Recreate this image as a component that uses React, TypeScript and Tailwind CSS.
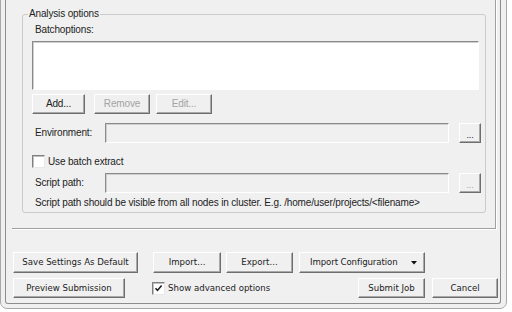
import { ReactNode } from "react";

const btn =
  "flex items-center justify-center bg-[#f0f0f0] border border-t-white border-l-white border-r-[#6e6e6e] border-b-[#6e6e6e] shadow-[inset_-1px_-1px_0_#a9a9a9]";
const sunken =
  "border border-t-[#8a8a8a] border-l-[#8a8a8a] border-r-white border-b-white shadow-[inset_1px_1px_0_#cfcfcf]";

function Button({ className, children, disabled }: { className: string; children: ReactNode; disabled?: boolean }) {
  return (
    <div className={`${btn} ${className} ${disabled ? "text-[#a3a3a3]" : "text-[#222]"}`}>{children}</div>
  );
}

function CheckBox({ checked }: { checked?: boolean }) {
  return (
    <div className="w-[13px] h-[13px] shrink-0 bg-white border border-t-[#808080] border-l-[#808080] border-r-[#e8e8e8] border-b-[#e8e8e8] shadow-[inset_1px_1px_0_#c0c0c0] flex items-center justify-center">
      {checked && (
        <svg width="9" height="9" viewBox="0 0 9 9">
          <path d="M1.5 4.2 L3.5 6.4 L7.6 1.6" fill="none" stroke="#1c1c1c" strokeWidth="1.6" />
        </svg>
      )}
    </div>
  );
}

export default function App() {
  return (
    <div className="w-[512px] h-[312px] bg-white overflow-hidden">
      {/* window frame */}
      <div className="-mt-[6px] w-[507px] h-[315px] border border-[#a8a8a8] rounded-b-[7px] bg-[#f0f0f0] pl-[4px] pr-[5px] pb-[4px]">
        <div className="h-full border border-t-0 border-[#8d8d8d] rounded-b-[3px] flex flex-col">
          {/* options panel */}
          <div className="ml-[6px] mr-[4px] border-r border-b border-[#a0a0a0] shadow-[1px_1px_0_#ffffff] pl-[10px] pr-[9px] pt-[19px] pb-[15px] font-['Liberation_Sans',Arial,sans-serif] text-[10px] leading-[12px] tracking-[-0.15px] text-[#222]">
            <div className="border border-[#cbcbcb] rounded-[3px] pl-[9px] pr-[4px] pb-[3px]">
              <div className="-mt-[7px] -ml-[4px] w-fit px-[1px] bg-[#f0f0f0]">Analysis options</div>
              <div className="mt-[4px] ml-[3px]">Batchoptions:</div>
              <div className={`mt-[5px] mr-[2px] h-[49px] bg-white ${sunken}`} />

              <div className="mt-[4px] flex h-[20px]">
                <Button className="w-[53px]">Add...</Button>
                <Button className="ml-[9px] w-[56px]" disabled>Remove</Button>
                <Button className="ml-[6px] w-[56px]" disabled>Edit...</Button>
              </div>

              <div className="mt-[9px] flex items-center h-[20px]">
                <div className="w-[73px] pl-[3px]">Environment:</div>
                <div className={`w-[344px] h-full bg-[#f0f0f0] ${sunken}`} />
                <Button className="ml-[10px] w-[22px] h-full">
                  <span className="mt-[4px] text-[9px]">...</span>
                </Button>
              </div>

              <div className="mt-[12px] flex items-center h-[13px]">
                <CheckBox />
                <span className="ml-[3px]">Use batch extract</span>
              </div>

              <div className="mt-[5px] flex items-center h-[20px]">
                <div className="w-[73px] pl-[3px]">Script path:</div>
                <div className={`w-[344px] h-full bg-[#f0f0f0] ${sunken}`} />
                <Button className="ml-[10px] w-[22px] h-full" disabled>
                  <span className="mt-[4px] text-[9px]">...</span>
                </Button>
              </div>

              <div className="mt-[4px] ml-[3px] whitespace-nowrap">
                Script path should be visible from all nodes in cluster. E.g. /home/user/projects/&lt;filename&gt;
              </div>
            </div>
          </div>

          {/* bottom buttons */}
          <div className="pl-[7px] pr-[2px] font-['DejaVu_Sans',Verdana,sans-serif] text-[8.6px] leading-[11px] text-[#222]">
            <div className="mt-[23px] flex h-[21px]">
              <Button className="w-[125px]">Save Settings As Default</Button>
              <Button className="ml-[15px] w-[68px]">Import...</Button>
              <Button className="ml-[5px] w-[67px]">Export...</Button>
              <Button className="ml-[6px] w-[126px] pl-[10px] pr-[7px] tracking-[-0.1px]">
                <span>Import Configuration</span>
                <svg className="ml-auto" width="6" height="4" viewBox="0 0 6 4">
                  <polygon points="0,0 6,0 3,3.5" fill="#111" />
                </svg>
              </Button>
            </div>
            <div className="mt-[5px] flex items-center h-[20px]">
              <Button className="w-[112px] h-full">Preview Submission</Button>
              <div className="ml-[27px]">
                <CheckBox checked />
              </div>
              <span className="ml-[3px]">Show advanced options</span>
              <Button className="ml-auto w-[67px] h-full">Submit Job</Button>
              <Button className="ml-[7px] w-[66px] h-full">Cancel</Button>
            </div>
          </div>
        </div>
      </div>
    </div>
  );
}
